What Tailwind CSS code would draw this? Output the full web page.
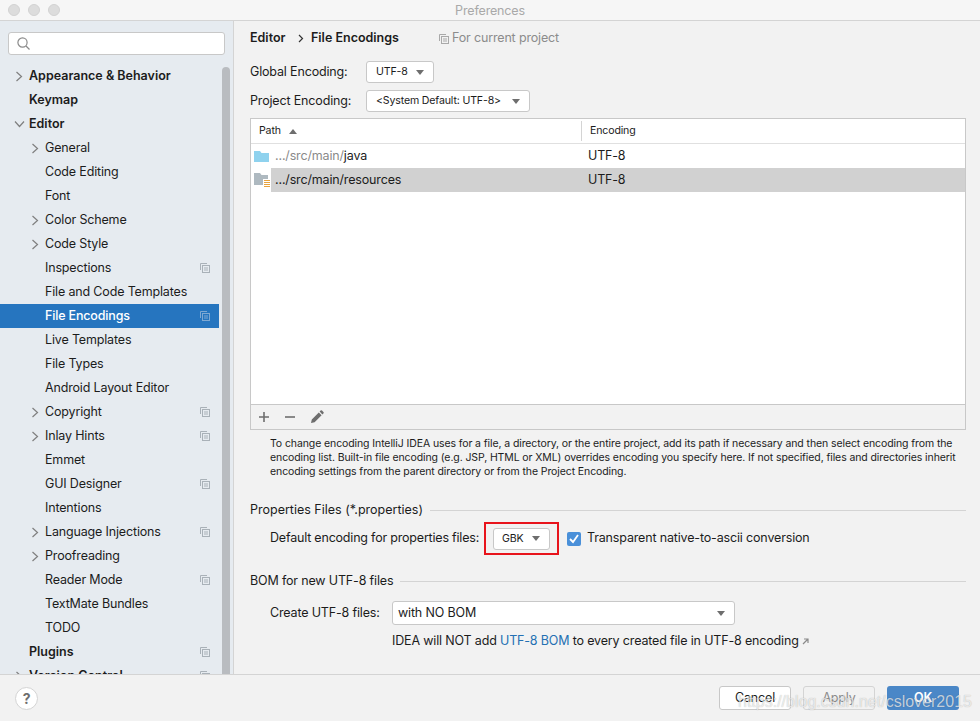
<!DOCTYPE html>
<html lang="en">
<head>
<meta charset="UTF-8">
<title>Preferences</title>
<script src="https://cdn.jsdelivr.net/npm/@tailwindcss/browser@4"></script>
</head>
<body class="bg-[#f2f2f2] overflow-hidden">
<div class="relative w-[980px] h-[721px] flex flex-col overflow-hidden font-['Inter','Liberation_Sans',sans-serif] text-[12.5px] tracking-[-0.16px] text-[#1c1c1c] bg-[#f2f2f2]">

  <!-- title bar -->
  <div class="h-[21px] shrink-0 flex items-center relative bg-[#f6f6f6] border-b border-[#d4d4d4]">
    <div class="flex gap-[8px] pl-[8px]">
      <span class="w-[12px] h-[12px] rounded-full bg-[#dcdcdc] border border-[#d2d2d2]"></span>
      <span class="w-[12px] h-[12px] rounded-full bg-[#dcdcdc] border border-[#d2d2d2]"></span>
      <span class="w-[12px] h-[12px] rounded-full bg-[#dcdcdc] border border-[#d2d2d2]"></span>
    </div>
    <div class="flex-1 text-center text-[#a9a9a9] pr-[60px] pt-[2px]">Preferences</div>
  </div>

  <div class="flex h-[653px] shrink-0">
    <!-- sidebar -->
    <div class="w-[234px] shrink-0 bg-[#e6ebf0] border-r border-[#d4d4d4] overflow-hidden relative">
      <div class="mx-[8px] mt-[11px] h-[23px] w-[217px] bg-white border border-[#c8c8c8] rounded-[3px] flex items-center pl-[7px]">
        <svg width="15" height="15" viewBox="0 0 15 15" fill="none" stroke="#8a8a8a" stroke-width="1.2"><circle cx="6.5" cy="6.5" r="4.6"/><path d="M10 10l3.5 3.5"/></svg>
      </div>
      <div class="mt-[9px] w-[219px]">
        <div class="h-[24px] flex items-center font-semibold tracking-normal"><span class="w-[29px] pl-[15px]"><svg width="8" height="11" viewBox="0 0 8 11" fill="none" stroke="#7f7f7f" stroke-width="1.2"><path d="M1.5 1l5 4.5-5 4.5"/></svg></span>Appearance &amp; Behavior</div>
        <div class="h-[24px] flex items-center font-semibold tracking-normal pl-[29px]">Keymap</div>
        <div class="h-[24px] flex items-center font-semibold tracking-normal"><span class="w-[29px] pl-[14px]"><svg width="11" height="8" viewBox="0 0 11 8" fill="none" stroke="#7f7f7f" stroke-width="1.2"><path d="M1 1.5l4.5 5 4.5-5"/></svg></span>Editor</div>
        <div class="h-[24px] flex items-center"><span class="w-[45px] pl-[31px]"><svg width="8" height="11" viewBox="0 0 8 11" fill="none" stroke="#7f7f7f" stroke-width="1.2"><path d="M1.5 1l5 4.5-5 4.5"/></svg></span>General</div>
        <div class="h-[24px] flex items-center pl-[45px]">Code Editing</div>
        <div class="h-[24px] flex items-center pl-[45px]">Font</div>
        <div class="h-[24px] flex items-center"><span class="w-[45px] pl-[31px]"><svg width="8" height="11" viewBox="0 0 8 11" fill="none" stroke="#7f7f7f" stroke-width="1.2"><path d="M1.5 1l5 4.5-5 4.5"/></svg></span>Color Scheme</div>
        <div class="h-[24px] flex items-center"><span class="w-[45px] pl-[31px]"><svg width="8" height="11" viewBox="0 0 8 11" fill="none" stroke="#7f7f7f" stroke-width="1.2"><path d="M1.5 1l5 4.5-5 4.5"/></svg></span>Code Style</div>
        <div class="h-[24px] flex items-center pl-[45px] justify-between pr-[9px]">Inspections<svg width="10" height="10" viewBox="0 0 10 10" fill="none" stroke="#a9b1b8"><path d="M7 .5H.5V7"/><rect x="2.5" y="2.5" width="7" height="7"/><path d="M4 5h4M4 7h4"/></svg></div>
        <div class="h-[24px] flex items-center pl-[45px]">File and Code Templates</div>
        <div class="h-[24px] flex items-center pl-[45px] justify-between pr-[9px] bg-[#2675bf] text-white font-medium">File Encodings<svg width="10" height="10" viewBox="0 0 10 10" fill="none" stroke="#7fa9d3"><path d="M7 .5H.5V7"/><rect x="2.5" y="2.5" width="7" height="7"/><path d="M4 5h4M4 7h4"/></svg></div>
        <div class="h-[24px] flex items-center pl-[45px]">Live Templates</div>
        <div class="h-[24px] flex items-center pl-[45px]">File Types</div>
        <div class="h-[24px] flex items-center pl-[45px]">Android Layout Editor</div>
        <div class="h-[24px] flex items-center justify-between pr-[9px]"><span class="flex items-center"><span class="w-[45px] pl-[31px]"><svg width="8" height="11" viewBox="0 0 8 11" fill="none" stroke="#7f7f7f" stroke-width="1.2"><path d="M1.5 1l5 4.5-5 4.5"/></svg></span>Copyright</span><svg width="10" height="10" viewBox="0 0 10 10" fill="none" stroke="#a9b1b8"><path d="M7 .5H.5V7"/><rect x="2.5" y="2.5" width="7" height="7"/><path d="M4 5h4M4 7h4"/></svg></div>
        <div class="h-[24px] flex items-center justify-between pr-[9px]"><span class="flex items-center"><span class="w-[45px] pl-[31px]"><svg width="8" height="11" viewBox="0 0 8 11" fill="none" stroke="#7f7f7f" stroke-width="1.2"><path d="M1.5 1l5 4.5-5 4.5"/></svg></span>Inlay Hints</span><svg width="10" height="10" viewBox="0 0 10 10" fill="none" stroke="#a9b1b8"><path d="M7 .5H.5V7"/><rect x="2.5" y="2.5" width="7" height="7"/><path d="M4 5h4M4 7h4"/></svg></div>
        <div class="h-[24px] flex items-center pl-[45px]">Emmet</div>
        <div class="h-[24px] flex items-center pl-[45px] justify-between pr-[9px]">GUI Designer<svg width="10" height="10" viewBox="0 0 10 10" fill="none" stroke="#a9b1b8"><path d="M7 .5H.5V7"/><rect x="2.5" y="2.5" width="7" height="7"/><path d="M4 5h4M4 7h4"/></svg></div>
        <div class="h-[24px] flex items-center pl-[45px]">Intentions</div>
        <div class="h-[24px] flex items-center justify-between pr-[9px]"><span class="flex items-center"><span class="w-[45px] pl-[31px]"><svg width="8" height="11" viewBox="0 0 8 11" fill="none" stroke="#7f7f7f" stroke-width="1.2"><path d="M1.5 1l5 4.5-5 4.5"/></svg></span>Language Injections</span><svg width="10" height="10" viewBox="0 0 10 10" fill="none" stroke="#a9b1b8"><path d="M7 .5H.5V7"/><rect x="2.5" y="2.5" width="7" height="7"/><path d="M4 5h4M4 7h4"/></svg></div>
        <div class="h-[24px] flex items-center"><span class="w-[45px] pl-[31px]"><svg width="8" height="11" viewBox="0 0 8 11" fill="none" stroke="#7f7f7f" stroke-width="1.2"><path d="M1.5 1l5 4.5-5 4.5"/></svg></span>Proofreading</div>
        <div class="h-[24px] flex items-center pl-[45px] justify-between pr-[9px]">Reader Mode<svg width="10" height="10" viewBox="0 0 10 10" fill="none" stroke="#a9b1b8"><path d="M7 .5H.5V7"/><rect x="2.5" y="2.5" width="7" height="7"/><path d="M4 5h4M4 7h4"/></svg></div>
        <div class="h-[24px] flex items-center pl-[45px]">TextMate Bundles</div>
        <div class="h-[24px] flex items-center pl-[45px]">TODO</div>
        <div class="h-[24px] flex items-center font-semibold tracking-normal pl-[29px] justify-between pr-[9px]">Plugins<svg width="10" height="10" viewBox="0 0 10 10" fill="none" stroke="#a9b1b8"><path d="M7 .5H.5V7"/><rect x="2.5" y="2.5" width="7" height="7"/><path d="M4 5h4M4 7h4"/></svg></div>
        <div class="h-[24px] flex items-center justify-between pr-[9px] font-semibold tracking-normal"><span class="flex items-center"><span class="w-[29px] pl-[15px]"><svg width="8" height="11" viewBox="0 0 8 11" fill="none" stroke="#7f7f7f" stroke-width="1.2"><path d="M1.5 1l5 4.5-5 4.5"/></svg></span>Version Control</span><svg width="10" height="10" viewBox="0 0 10 10" fill="none" stroke="#a9b1b8"><path d="M7 .5H.5V7"/><rect x="2.5" y="2.5" width="7" height="7"/><path d="M4 5h4M4 7h4"/></svg></div>
      </div>
      <!-- scrollbar -->
      <div class="absolute left-[222px] top-[46px] bottom-0 w-[8px] rounded-t-[4px] bg-[#b9bcc0]"></div>
    </div>

    <!-- main panel -->
    <div class="flex-1 pl-[16px] pr-[14px] min-w-0">
      <div class="mt-[9px] h-[17px] flex items-center font-semibold tracking-normal">
        <span class="w-[37px]">Editor</span>
        <svg class="ml-[11px] mr-[7px]" width="6" height="9" viewBox="0 0 6 9" fill="none" stroke="#333" stroke-width="1.2"><path d="M1 1l3.5 3.5L1 8"/></svg>
        <span class="w-[88px] whitespace-nowrap">File Encodings</span>
        <svg class="ml-[40px] mr-[3px]" width="10" height="10" viewBox="0 0 10 10" fill="none" stroke="#a9a9a9"><path d="M7 .5H.5V7"/><rect x="2.5" y="2.5" width="7" height="7"/><path d="M4 5h4M4 7h4"/></svg>
        <span class="font-normal tracking-[-0.16px] text-[#8c8c8c]">For current project</span>
      </div>

      <div class="mt-[14px] flex items-center h-[22px]">
        <span class="w-[116px]">Global Encoding:</span>
        <div class="w-[68px] h-[22px] bg-white border border-[#c8c8c8] rounded-[3px] flex items-center justify-between pl-[9px] pr-[9px] text-[10.6px]">UTF-8<span class="w-0 h-0 border-x-[4.5px] border-x-transparent border-t-[5px] border-t-[#6e6e6e]"></span></div>
      </div>
      <div class="mt-[7px] flex items-center h-[22px]">
        <span class="w-[116px]">Project Encoding:</span>
        <div class="w-[164px] h-[22px] bg-white border border-[#c8c8c8] rounded-[3px] flex items-center justify-between pl-[9px] pr-[9px] text-[10.6px] whitespace-nowrap">&lt;System Default: UTF-8&gt;<span class="w-0 h-0 border-x-[4.5px] border-x-transparent border-t-[5px] border-t-[#6e6e6e]"></span></div>
      </div>

      <!-- table -->
      <div class="mt-[6px] w-[716px] h-[312px] border border-[#c8c8c8] bg-white flex flex-col">
        <div class="h-[25px] shrink-0 flex items-center border-b border-[#e0e0e0] text-[10.6px]">
          <div class="w-[331px] pl-[8px] flex items-center gap-[8px] border-r border-[#d4d4d4] h-[20px]">Path<span class="w-0 h-0 border-x-[4.5px] border-x-transparent border-b-[5px] border-b-[#6e6e6e]"></span></div>
          <div class="pl-[8px]">Encoding</div>
        </div>
        <div class="h-[24px] shrink-0 flex items-center">
          <svg class="ml-[3px] mr-[6px]" width="15" height="12" viewBox="0 0 15 12"><path d="M0 1h6l1.5 2H15v9H0z" fill="#8fd2ee"/></svg>
          <span class="w-[313px] text-[#8a8a8a]">.../src/main/<span class="text-[#1c1c1c]">java</span></span>
          <span>UTF-8</span>
        </div>
        <div class="h-[24px] shrink-0 flex items-center">
          <svg class="ml-[3px] shrink-0" width="17" height="17" viewBox="0 0 17 17"><path d="M0 1h6l1.5 2H14v10H0z" fill="#aeb9c0"/><rect x="9" y="7" width="8" height="10" fill="#fff"/><path d="M10 8.5h6M10 10.5h6M10 12.5h6M10 14.5h6" stroke="#e8a33d"/></svg>
          <div class="flex-1 h-full flex items-center bg-[#d1d1d1]">
            <span class="w-[317px] pl-[4px]">.../src/main/resources</span>
            <span>UTF-8</span>
          </div>
        </div>
        <div class="flex-1"></div>
        <div class="h-[25px] shrink-0 flex items-center border-t border-[#c8c8c8] bg-[#f2f2f2] pl-[7px] gap-[14px]">
          <svg width="12" height="12" viewBox="0 0 12 12" stroke="#6e6e6e" stroke-width="1.6"><path d="M6 1v10M1 6h10"/></svg>
          <svg width="12" height="12" viewBox="0 0 12 12" stroke="#6e6e6e" stroke-width="1.6"><path d="M1 6h10"/></svg>
          <svg width="14" height="14" viewBox="0 0 14 14" fill="#6e6e6e"><path d="M1 13l.8-3.6 7-7 2.8 2.8-7 7zM9.6 1.6l1-1a1 1 0 0 1 1.4 0l1.4 1.4a1 1 0 0 1 0 1.4l-1 1z"/></svg>
        </div>
      </div>

      <div class="mt-[7px] ml-[20px] w-[696px] text-[10.5px] tracking-[-0.1px] leading-[14px] text-[#1c1c1c]">To change encoding IntelliJ IDEA uses for a file, a directory, or the entire project, add its path if necessary and then select encoding from the encoding list. Built-in file encoding (e.g. JSP, HTML or XML) overrides encoding you specify here. If not specified, files and directories inherit encoding settings from the parent directory or from the Project Encoding.</div>

      <div class="mt-[23px] h-[16px] flex items-center gap-[7px] w-[716px]">
        <span class="whitespace-nowrap tracking-normal">Properties Files (*.properties)</span>
        <div class="flex-1 h-px bg-[#d4d4d4]"></div>
      </div>
      <div class="mt-[4px] ml-[20px] flex items-center h-[33px]">
        <span class="w-[214px] whitespace-nowrap tracking-[-0.2px]">Default encoding for properties files:</span>
        <div class="w-[75px] h-[33px] border-2 border-[#e8141c] flex items-center justify-center shrink-0">
          <div class="w-[57px] h-[22px] bg-white border border-[#c8c8c8] rounded-[3px] flex items-center justify-between pl-[8px] pr-[9px] text-[10.6px]">GBK<span class="w-0 h-0 border-x-[4.5px] border-x-transparent border-t-[5px] border-t-[#6e6e6e]"></span></div>
        </div>
        <span class="ml-[8px] w-[14px] h-[14px] rounded-[2px] bg-[#4a90d9] flex items-center justify-center"><svg width="10" height="10" viewBox="0 0 10 10" fill="none" stroke="#fff" stroke-width="1.8"><path d="M1 5l3 3 5-7"/></svg></span>
        <span class="ml-[6px] whitespace-nowrap">Transparent native-to-ascii conversion</span>
      </div>

      <div class="mt-[18px] h-[16px] flex items-center gap-[7px] w-[716px]">
        <span class="whitespace-nowrap">BOM for new UTF-8 files</span>
        <div class="flex-1 h-px bg-[#d4d4d4]"></div>
      </div>
      <div class="mt-[12px] ml-[20px] flex items-center h-[24px]">
        <span class="w-[122px] whitespace-nowrap">Create UTF-8 files:</span>
        <div class="w-[343px] h-[24px] bg-white border border-[#c8c8c8] rounded-[3px] flex items-center justify-between pl-[5px] pr-[9px]">with NO BOM<span class="w-0 h-0 border-x-[4.5px] border-x-transparent border-t-[5px] border-t-[#6e6e6e]"></span></div>
      </div>
      <div class="mt-[8px] ml-[142px] h-[16px] flex items-center whitespace-nowrap">IDEA will NOT add&nbsp;<span class="text-[#2470b3]">UTF-8 BOM</span>&nbsp;to every created file in UTF-8 encoding<svg class="ml-[3px]" width="7" height="7" viewBox="0 0 7 7" fill="none" stroke="#8a8a8a" stroke-width="1.2"><path d="M1 6l5-5M2 1h4v4"/></svg></div>
    </div>
  </div>

  <!-- footer -->
  <div class="flex-1 border-t border-[#d4d4d4] flex items-center justify-between pl-[15px] pr-[21px] bg-[#f2f2f2]">
    <div class="w-[23px] h-[23px] rounded-full bg-white border border-[#d4d4d4] flex items-center justify-center font-bold text-[#6e6e6e] text-[14px]">?</div>
    <div class="flex gap-[12px]">
      <div class="w-[72px] h-[24px] bg-white border border-[#c8c8c8] rounded-[3px] flex items-center justify-center">Cancel</div>
      <div class="w-[72px] h-[24px] bg-[#f2f2f2] border border-[#d4d4d4] rounded-[3px] flex items-center justify-center text-[#8c8c8c]">Apply</div>
      <div class="w-[72px] h-[24px] bg-[#4a87c7] rounded-[3px] flex items-center justify-center text-white font-semibold">OK</div>
    </div>
  </div>

  <!-- csdn watermark -->
  <div class="absolute left-[738px] top-[690px] text-[16px] leading-[24px] tracking-normal whitespace-nowrap text-white/70 [text-shadow:0_0_1px_rgba(0,0,0,0.3)] font-['Liberation_Sans',sans-serif]">https://blog.csdn.net/cslover2015</div>
</div>
</body>
</html>
